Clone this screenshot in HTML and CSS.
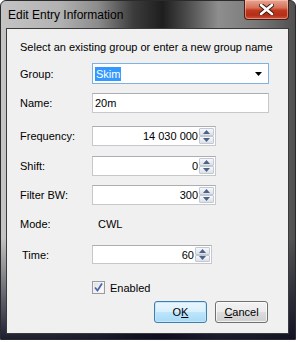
FILE: index.html
```html
<!DOCTYPE html>
<html lang="en">
<head>
    <meta charset="UTF-8">
    <title>Edit Entry Information</title>
    <link rel="stylesheet" href="styles.css">
</head>
<body>
    <div class="window">
        <div class="titlebar">
            <span class="title">Edit Entry Information</span>
            <div class="close">
                <svg width="15" height="11" viewBox="0 0 15 11">
                    <path d="M2 1 L13 10 M13 1 L2 10" stroke="#3a1a14" stroke-width="4.5" stroke-linecap="round"/>
                    <path d="M2 1 L13 10 M13 1 L2 10" stroke="#ffffff" stroke-width="2.6" stroke-linecap="round"/>
                </svg>
            </div>
        </div>

        <div class="client">
            <p class="hint">Select an existing group or enter a new group name</p>

            <div class="row row-group">
                <span class="lbl">Group:</span>
                <div class="combo">
                    <span class="sel">Skim</span>
                    <svg class="arrow" width="7" height="4" viewBox="0 0 7 4"><path d="M0 0 H7 L3.5 4 Z" fill="#000"/></svg>
                </div>
            </div>

            <div class="row row-name">
                <span class="lbl">Name:</span>
                <div class="text">20m</div>
            </div>

            <div class="row row-freq">
                <span class="lbl">Frequency:</span>
                <div class="num">
                    <span class="val">14 030 000</span>
                    <div class="spin">
                        <span class="up"><svg width="7" height="4" viewBox="0 0 7 4"><path d="M0 4 H7 L3.5 0 Z"/></svg></span>
                        <span class="dn"><svg width="7" height="4" viewBox="0 0 7 4"><path d="M0 0 H7 L3.5 4 Z"/></svg></span>
                    </div>
                </div>
            </div>

            <div class="row row-shift">
                <span class="lbl">Shift:</span>
                <div class="num">
                    <span class="val">0</span>
                    <div class="spin">
                        <span class="up"><svg width="7" height="4" viewBox="0 0 7 4"><path d="M0 4 H7 L3.5 0 Z"/></svg></span>
                        <span class="dn"><svg width="7" height="4" viewBox="0 0 7 4"><path d="M0 0 H7 L3.5 4 Z"/></svg></span>
                    </div>
                </div>
            </div>

            <div class="row row-filter">
                <span class="lbl">Filter BW:</span>
                <div class="num">
                    <span class="val">300</span>
                    <div class="spin">
                        <span class="up"><svg width="7" height="4" viewBox="0 0 7 4"><path d="M0 4 H7 L3.5 0 Z"/></svg></span>
                        <span class="dn"><svg width="7" height="4" viewBox="0 0 7 4"><path d="M0 0 H7 L3.5 4 Z"/></svg></span>
                    </div>
                </div>
            </div>

            <div class="row row-mode">
                <span class="lbl">Mode:</span>
                <span class="mode">CWL</span>
            </div>

            <div class="row row-time">
                <span class="lbl lbl-time">Time:</span>
                <div class="num num-time">
                    <span class="val">60</span>
                    <div class="spin">
                        <span class="up"><svg width="7" height="4" viewBox="0 0 7 4"><path d="M0 4 H7 L3.5 0 Z"/></svg></span>
                        <span class="dn"><svg width="7" height="4" viewBox="0 0 7 4"><path d="M0 0 H7 L3.5 4 Z"/></svg></span>
                    </div>
                </div>
            </div>

            <div class="row row-check">
                <span class="check">
                    <svg width="11" height="11" viewBox="0 0 11 11">
                        <path d="M2 5.5 L4.5 8.5 L9 1.5" fill="none" stroke="#4a64ad" stroke-width="1.7"/>
                    </svg>
                </span>
                <span class="check-lbl">Enabled</span>
            </div>

            <div class="buttons">
                <div class="btn btn-default">O<u>K</u></div>
                <div class="btn"><u>C</u>ancel</div>
            </div>
        </div>
    </div>
</body>
</html>
```

FILE: styles.css
```css
* {
    box-sizing: border-box;
}
body {
    margin: 0;
    background: #ffffff;
    font-family: "Liberation Sans", Arial, sans-serif;
    font-size: 11px;
    color: #000;
}
.window {
    width: 296px;
    height: 340px;
    border: 1px solid #2b2b2b;
    border-radius: 6px 6px 0 0;
    display: flex;
    flex-direction: column;
    background:
        linear-gradient(to bottom, rgba(0,0,0,0) 0, rgba(0,0,0,0) 70%, rgba(12,12,34,0.9) 100%),
        linear-gradient(to right, #c4c4c4 0%, #b2b2b2 20%, #8c8c8c 33%, #3c3c3c 45%, #1e1e1e 55%, #4a4a4a 63%, #8e8e8e 74%, #7a7a7a 86%, #505050 100%);
}
.titlebar {
    height: 27px;
    display: flex;
    align-items: flex-start;
    padding-left: 7px;
}
.title {
    font-size: 12px;
    line-height: 12px;
    margin-top: 8px;
    color: #000000;
}
.close {
    margin-left: auto;
    margin-right: 6px;
    margin-top: -1px;
    width: 45px;
    height: 20px;
    border: 1px solid #4a1c14;
    border-top: none;
    border-radius: 0 0 4px 4px;
    background: linear-gradient(to bottom, #e8a593 0%, #d6725a 40%, #c1381d 55%, #b42e17 80%, #d0553a 100%);
    box-shadow: inset 0 0 0 1px rgba(255,220,200,0.45);
    display: flex;
    align-items: center;
    justify-content: center;
}
.client {
    margin: 0 6px 0 5px;
    height: 306px;
    border: 1px solid #3a3a3a;
    background: #f0f0f0;
}
.hint {
    margin: 12px 0 0 0;
    padding-left: 13px;
    line-height: 13px;
}
.row {
    display: flex;
    align-items: center;
    padding-left: 13px;
}
.lbl {
    width: 72px;
    flex: none;
}
.lbl-time {
    width: 70px;
    margin-left: 2px;
}
.row-group { margin-top: 9px; height: 21px; }
.row-name { margin-top: 9px; height: 20px; }
.row-freq { margin-top: 13px; height: 20px; }
.row-shift { margin-top: 10px; height: 20px; }
.row-filter { margin-top: 9px; height: 20px; }
.row-mode { margin-top: 12px; height: 13px; }
.row-time { margin-top: 15px; height: 19px; }
.row-check { margin-top: 17px; height: 13px; }

.combo {
    width: 177px;
    height: 21px;
    background: #fff;
    border: 1px solid #7fb2e4;
    display: flex;
    align-items: center;
    padding-left: 2px;
}
.sel {
    background: #3399ff;
    color: #fff;
    line-height: 14px;
    padding: 0 1px;
}
.arrow {
    margin-left: auto;
    margin-right: 6px;
}
.text {
    width: 177px;
    height: 20px;
    background: #fff;
    border: 1px solid #c6c8cc;
    border-top-color: #abadb3;
    padding-left: 2px;
    line-height: 18px;
}
.num {
    width: 124px;
    height: 20px;
    background: #fff;
    border: 1px solid #c6c8cc;
    border-top-color: #abadb3;
    display: flex;
    align-items: stretch;
    padding: 1px;
}
.num-time {
    width: 120px;
    height: 19px;
}
.val {
    flex: 1;
    text-align: right;
    padding-right: 1px;
    line-height: 16px;
}
.spin {
    width: 15px;
    display: flex;
    flex-direction: column;
}
.spin span {
    flex: 1;
    border: 1px solid #c3c9d3;
    border-radius: 1px;
    background: linear-gradient(to bottom, #f7f8fa 0%, #e9ecf1 50%, #dce1e9 100%);
    display: flex;
    align-items: center;
    justify-content: center;
}
.spin svg {
    fill: #4d6185;
}
.mode {
    margin-left: 6px;
}
.check {
    margin-left: 72px;
    width: 13px;
    height: 13px;
    border: 1px solid #9a9b9c;
    background: linear-gradient(135deg, #d9dbde 0%, #f4f4f4 60%, #ffffff 100%);
    box-shadow: inset 0 0 0 1px #f2f2f2;
    display: flex;
    align-items: center;
    justify-content: center;
}
.check-lbl {
    margin-left: 5px;
}
.buttons {
    margin-top: 7px;
    display: flex;
    justify-content: flex-end;
    gap: 8px;
    padding-right: 20px;
}
.btn {
    width: 53px;
    height: 22px;
    border: 1px solid #707070;
    border-radius: 3px;
    background: linear-gradient(to bottom, #f2f2f2 0%, #ebebeb 49%, #dddddd 50%, #cfcfcf 100%);
    box-shadow: inset 0 0 0 1px rgba(255,255,255,0.7);
    text-align: center;
    line-height: 20px;
}
.btn-default {
    border-color: #3c7fb1;
    background: linear-gradient(to bottom, #eaf6fd 0%, #d9f0fc 49%, #bee6fd 50%, #a7d9f5 100%);
    box-shadow: inset 0 0 0 1px #c5e7f8;
}
```
